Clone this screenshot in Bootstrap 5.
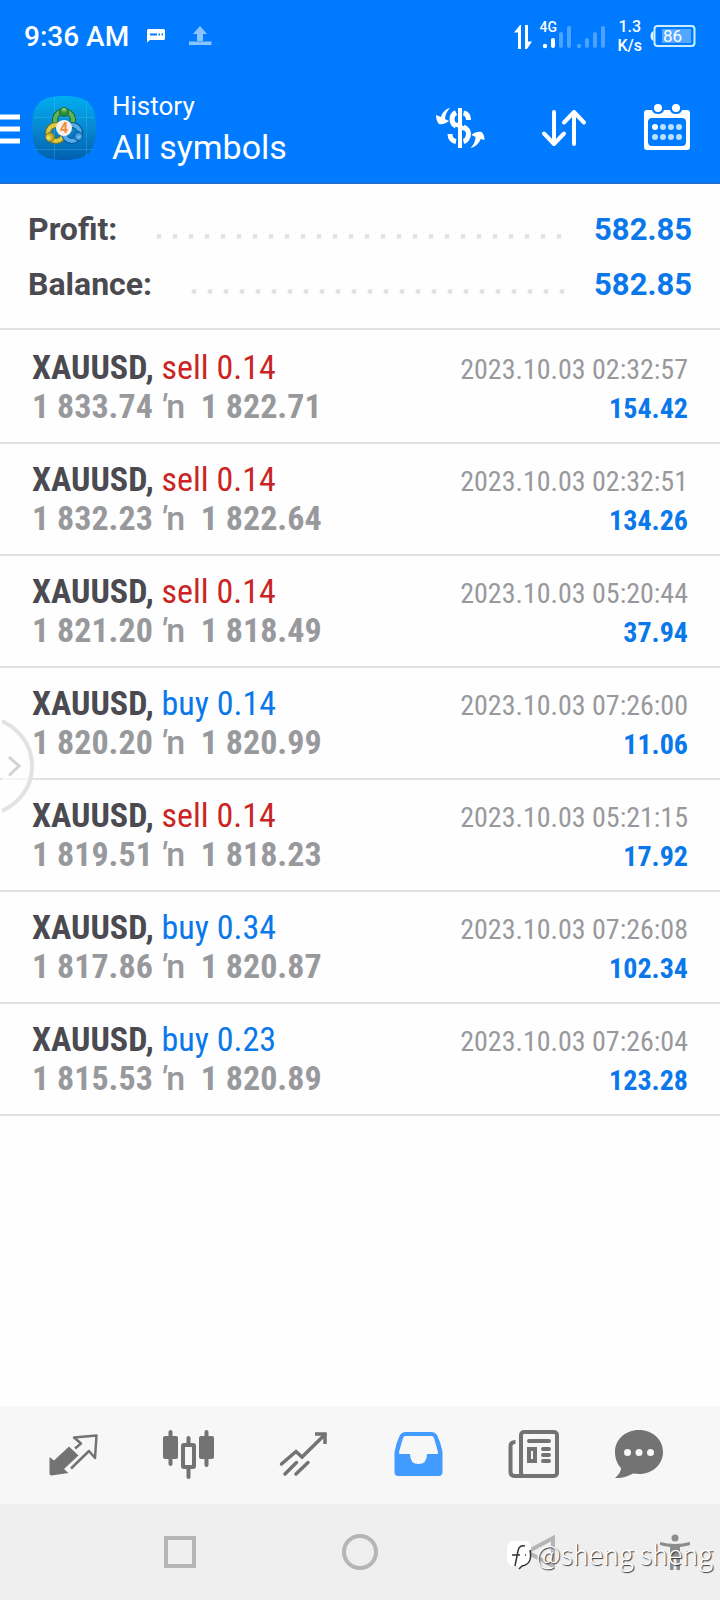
<!DOCTYPE html>
<html lang="en">
<head>
<meta charset="utf-8">
<meta name="viewport" content="width=device-width, initial-scale=1">
<title>History – All symbols</title>
<link href="https://cdn.jsdelivr.net/npm/bootstrap@5.3.0/dist/css/bootstrap.min.css" rel="stylesheet">
<style>
  :root { --brand: #007aff; --ink: #4a4a50; --muted-ink: #98999c; --rule: #e2e2e2; --gain: #0a78ea; --loss: #cb2424; }
  body { font-family: Roboto, "Noto Sans", sans-serif; color: var(--ink); background: #fefefe; }
  svg { display: block; flex: none; }
  .icon-btn { background: none; border: 0; padding: 0; display: block; }

  .app-header { background: var(--brand); border-bottom: 2px solid #1b6fd6; }
  .status-bar { height: 72px; padding: 0 24px; }
  .clock { font-size: 28px; line-height: 32px; font-weight: 500; padding-top: 2px; }
  .net-rate { font-size: 16px; line-height: 19px; font-weight: 500; }
  .toolbar-row { height: 110px; padding: 2px 29px 0 0; }
  .titles { padding-top: 6px; }
  .title-small { font-size: 26px; line-height: 32px; }
  .title-big { font-size: 34px; line-height: 50px; }

  .summary { padding: 18px 28px 16px; border-bottom: 2px solid var(--rule); }
  .summary-line { font-size: 32px; line-height: 55px; font-weight: 700; }
  .summary-line dd { color: var(--gain); font-size: 31px; }
  .leader { height: 5px; margin: 14px 24px 0 34px;
    background: radial-gradient(circle, #e2e2e2 2px, transparent 3px) 0 0 / 16px 5px repeat-x; }

  .deals { padding-top: 2px; }
  .deal { padding: 16px 32px; border-bottom: 2px solid var(--rule); font-family: "Roboto Condensed", Roboto, sans-serif; }
  .deal-main { font-size: 34px; line-height: 39px; white-space: pre; }
  .deal-prices { color: var(--muted-ink); font-weight: 700; }
  .roman { font: 500 34px/30px Roboto, sans-serif; }
  .deal-side { font-size: 28px; line-height: 34px; white-space: nowrap; }
  .deal-time { color: var(--muted-ink); }
  .deal-profit { color: var(--gain); font-weight: 700; }
  .is-buy { color: var(--gain); }
  .is-sell { color: var(--loss); }

  .edge-handle { position: absolute; left: 2px; top: 716px; }
  .tab-bar { background: #f7f7f7; height: 98px; padding: 0 15px; color: #737373; }
  .tab-bar a { color: inherit; }
  .tab-bar a.active { color: #429bff; }
  .system-bar { background: #efefef; height: 96px; padding-left: 12.5%; }
  .watermark { position: absolute; right: 7px; bottom: 24px; color: #fff; font: 300 27px/44px "Noto Sans CJK SC", sans-serif; text-shadow: 1px 1px 1px #333; pointer-events: none; }
</style>
</head>
<body>
<div class="d-flex flex-column min-vh-100 position-relative overflow-hidden">

  <header class="app-header text-white">
    <div class="status-bar d-flex align-items-center">
      <span class="clock">9:36 AM</span>
      <svg class="ms-3" width="68" height="24" viewBox="145 24 68 24">
        <path fill="#fff" d="M148.500 29h15q1.500 0 1.500 1.500v8q0 1.500-1.500 1.500h-13.500l-3 2.500v-12q0-1.500 1.500-1.500z"/>
        <path stroke="#007aff" stroke-width="2" d="M150 34.500h7m1.500 0h1.500m1.500 0h1.500"/>
        <path fill="#8cc4ff" d="M200 26l7 8h-4v7h-6v-7h-4zM189 41.500h22.500v3.500h-22.500z"/>
      </svg>
      <svg class="ms-auto" width="96" height="34" viewBox="513 19 96 34">
        <g fill="#fff">
          <path d="M514 32.500l6-7.500h1v24h-3v-16.500zM525 25h3v16.500h4l-5 7.500h-2z"/>
          <text x="539.500" y="31.500" font-size="14" font-weight="500">4G</text>
          <circle cx="545" cy="46" r="2.200"/><rect x="551" y="38" width="4" height="10" rx="2"/>
        </g>
        <g fill="#4da2ff">
          <rect x="559" y="32" width="4" height="16" rx="2"/><rect x="567" y="26" width="4" height="22" rx="2"/>
          <circle cx="579" cy="46" r="2.200"/><rect x="585" y="38" width="4" height="10" rx="2"/>
          <rect x="593" y="32" width="4" height="16" rx="2"/><rect x="601" y="26" width="4" height="22" rx="2"/>
        </g>
      </svg>
      <div class="net-rate text-center mx-2">1.3<br>K/s</div>
      <svg width="46" height="24" viewBox="650 24 46 24">
        <path fill="#d9f4ff" d="M653.500 31v10q-3-1-3-5t3-5z"/>
        <rect x="654.500" y="26" width="40" height="20" rx="3" fill="none" stroke="#c9efff" stroke-width="2"/>
        <rect x="662" y="29" width="29" height="14" fill="#55a8ff"/>
        <text x="663" y="42" font-size="17" fill="#fff">86</text>
      </svg>
    </div>

    <div class="toolbar-row d-flex align-items-center">
      <button class="icon-btn" aria-label="Menu">
        <svg width="20" height="64" viewBox="0 97 20 64"><path stroke="#fff" stroke-width="5" d="M0 118h20M0 130h20M0 142h20"/></svg>
      </button>
      <svg class="ms-2 me-1" width="72" height="64" viewBox="-4 0 72 64" aria-hidden="true">
        <defs>
          <linearGradient id="tile" x2="0" y2="1"><stop stop-color="#00aef0"/><stop offset=".5" stop-color="#0788d0"/><stop offset="1" stop-color="#0060b0"/></linearGradient>
          <radialGradient id="gr" cx=".5" cy=".15"><stop stop-color="#9fdc7c"/><stop offset="1" stop-color="#2c8a3c"/></radialGradient>
          <radialGradient id="ye" cx=".3" cy=".6"><stop stop-color="#f3ea72"/><stop offset="1" stop-color="#b9a41c"/></radialGradient>
          <radialGradient id="bl" cx=".6" cy=".6"><stop stop-color="#7cc6f5"/><stop offset="1" stop-color="#1878c8"/></radialGradient>
        </defs>
        <path fill="url(#tile)" d="M32 0c24 0 32 8 32 32s-8 32-32 32S0 56 0 32 8 0 32 0z"/>
        <path stroke="#5fd0f5" stroke-opacity=".25" d="M22.500 1v62M54.500 4v56M2 21.500h60M2 53.500h60"/>
        <g fill="none" stroke-linecap="round">
          <circle cx="32" cy="24" r="9" stroke="#1d6b35" stroke-width="6"/><circle cx="32" cy="24" r="9" stroke="#5cb554" stroke-width="4"/>
          <circle cx="24" cy="37" r="8" stroke="#7c7420" stroke-width="6"/><circle cx="24" cy="37" r="8" stroke="#dccb45" stroke-width="4"/>
          <circle cx="40" cy="37" r="8" stroke="#0c5a9c" stroke-width="6"/><circle cx="40" cy="37" r="8" stroke="#55aeea" stroke-width="4"/>
        </g>
        <circle cx="32" cy="16" r="4.500" fill="url(#gr)" stroke="#1d6b35"/>
        <circle cx="18" cy="41" r="4.500" fill="url(#ye)" stroke="#7c7420"/>
        <circle cx="46" cy="40" r="4.500" fill="url(#bl)" stroke="#0c5a9c"/>
        <circle cx="32" cy="32" r="8" fill="#f7f1ea"/>
        <text x="32" y="37" text-anchor="middle" font-size="14" font-weight="700" fill="#f08a35">4</text>
      </svg>
      <div class="titles ms-2">
        <div class="title-small">History</div>
        <h1 class="title-big fw-normal mb-0">All symbols</h1>
      </div>
      <div class="d-flex align-items-center ms-auto gap-5">
        <button class="icon-btn" aria-label="Currency">
          <svg width="50" height="52" viewBox="435 102 50 52">
            <g fill="none" stroke="#fff" stroke-width="5">
              <path d="M456 112.500c-3 1.500-4 4-4 6.500 0 4 2 6 4 7M463.500 113c3 .5 5 3 5 7M463.500 127c3 1.500 5 4 5 7 0 4-2.500 7-5 7.500M450 134c0 4 2.500 7 6 7.500"/>
              <path stroke-width="4" d="M460 108v40"/>
              <path stroke-width="4" d="M453 123q8 4 12 6"/>
            </g>
            <path fill="#fff" d="M450 108c-5 1-8 5-9 9l-5-2c0 4 1 7 3 9 4 1 7-1 10-3l-4-2c0-4 2-8 5-11zM470.500 148c5-1 9-5 10-9l4 1c0-4-1-6-3-8-4-1-8 1-10 3l4 2c0 4-2 8-5 11z"/>
          </svg>
        </button>
        <button class="icon-btn mx-2" aria-label="Sort">
          <svg width="46" height="52" viewBox="541 102 46 52" fill="none" stroke="#fff" stroke-width="4" stroke-linecap="round" stroke-linejoin="round">
            <path d="M554 112v32M544 133.500l10 10.500 10-10.500M574 144v-32M564 122.500l10-10.500 10 10.500"/>
          </svg>
        </button>
        <button class="icon-btn" aria-label="Period">
          <svg width="48" height="52" viewBox="643 102 48 52">
            <path fill="#fff" fill-rule="evenodd" d="M647 110h5q1 4 6 4t6-4h6q1 4 6 4t6-4h5q3 0 3 3v34q0 3-3 3h-40q-3 0-3-3v-34q0-3 3-3zM652 118q-4 0-4 4v20q0 4 4 4h30q4 0 4-4v-20q0-4-4-4z"/>
            <g fill="#fff"><circle cx="658" cy="108" r="4"/><circle cx="676" cy="108" r="4"/></g>
            <g fill="#b5e2ff"><circle cx="655" cy="127" r="3" fill="#fff"/><circle cx="663" cy="127" r="3"/><circle cx="671" cy="127" r="3"/><circle cx="679" cy="127" r="3"/><circle cx="655" cy="137" r="3"/><circle cx="663" cy="137" r="3"/><circle cx="671" cy="137" r="3"/><circle cx="679" cy="137" r="3"/></g>
          </svg>
        </button>
      </div>
    </div>
  </header>

  <main class="flex-grow-1">
    <dl class="summary mb-0">
      <div class="summary-line d-flex align-items-center"><dt>Profit:</dt><span class="leader flex-grow-1"></span><dd class="mb-0">582.85</dd></div>
      <div class="summary-line d-flex align-items-center"><dt>Balance:</dt><span class="leader flex-grow-1"></span><dd class="mb-0">582.85</dd></div>
    </dl>

    <ul class="deals list-unstyled mb-0">
      <li class="deal">
        <div class="d-flex justify-content-between align-items-baseline"><span class="deal-main"><b>XAUUSD,</b> <span class="is-sell">sell 0.14</span></span><time class="deal-side deal-time">2023.10.03 02:32:57</time></div>
        <div class="d-flex justify-content-between align-items-baseline"><span class="deal-main deal-prices">1 833.74 <span class="roman"><i>′</i>n</span>  1 822.71</span><span class="deal-side deal-profit">154.42</span></div>
      </li>
      <li class="deal">
        <div class="d-flex justify-content-between align-items-baseline"><span class="deal-main"><b>XAUUSD,</b> <span class="is-sell">sell 0.14</span></span><time class="deal-side deal-time">2023.10.03 02:32:51</time></div>
        <div class="d-flex justify-content-between align-items-baseline"><span class="deal-main deal-prices">1 832.23 <span class="roman"><i>′</i>n</span>  1 822.64</span><span class="deal-side deal-profit">134.26</span></div>
      </li>
      <li class="deal">
        <div class="d-flex justify-content-between align-items-baseline"><span class="deal-main"><b>XAUUSD,</b> <span class="is-sell">sell 0.14</span></span><time class="deal-side deal-time">2023.10.03 05:20:44</time></div>
        <div class="d-flex justify-content-between align-items-baseline"><span class="deal-main deal-prices">1 821.20 <span class="roman"><i>′</i>n</span>  1 818.49</span><span class="deal-side deal-profit">37.94</span></div>
      </li>
      <li class="deal">
        <div class="d-flex justify-content-between align-items-baseline"><span class="deal-main"><b>XAUUSD,</b> <span class="is-buy">buy 0.14</span></span><time class="deal-side deal-time">2023.10.03 07:26:00</time></div>
        <div class="d-flex justify-content-between align-items-baseline"><span class="deal-main deal-prices">1 820.20 <span class="roman"><i>′</i>n</span>  1 820.99</span><span class="deal-side deal-profit">11.06</span></div>
      </li>
      <li class="deal">
        <div class="d-flex justify-content-between align-items-baseline"><span class="deal-main"><b>XAUUSD,</b> <span class="is-sell">sell 0.14</span></span><time class="deal-side deal-time">2023.10.03 05:21:15</time></div>
        <div class="d-flex justify-content-between align-items-baseline"><span class="deal-main deal-prices">1 819.51 <span class="roman"><i>′</i>n</span>  1 818.23</span><span class="deal-side deal-profit">17.92</span></div>
      </li>
      <li class="deal">
        <div class="d-flex justify-content-between align-items-baseline"><span class="deal-main"><b>XAUUSD,</b> <span class="is-buy">buy 0.34</span></span><time class="deal-side deal-time">2023.10.03 07:26:08</time></div>
        <div class="d-flex justify-content-between align-items-baseline"><span class="deal-main deal-prices">1 817.86 <span class="roman"><i>′</i>n</span>  1 820.87</span><span class="deal-side deal-profit">102.34</span></div>
      </li>
      <li class="deal">
        <div class="d-flex justify-content-between align-items-baseline"><span class="deal-main"><b>XAUUSD,</b> <span class="is-buy">buy 0.23</span></span><time class="deal-side deal-time">2023.10.03 07:26:04</time></div>
        <div class="d-flex justify-content-between align-items-baseline"><span class="deal-main deal-prices">1 815.53 <span class="roman"><i>′</i>n</span>  1 820.89</span><span class="deal-side deal-profit">123.28</span></div>
      </li>
    </ul>
  </main>

  <button class="icon-btn edge-handle" aria-label="Open side panel">
    <svg width="34" height="100" viewBox="2 716 34 100" fill="none">
      <circle cx="-16" cy="766" r="48" fill="#fefefe" fill-opacity=".7" stroke="#e2e2e2" stroke-width="4"/>
      <path stroke="#d2d2d2" stroke-width="3" d="M9 757l10 9-10 9.500"/>
    </svg>
  </button>

  <nav class="tab-bar d-flex align-items-center" aria-label="Sections">
    <a href="#quotes" class="flex-fill d-flex justify-content-center" aria-label="Quotes">
      <svg width="54" height="54" viewBox="46 1428 54 54">
        <path fill="currentColor" d="M49.500 1457l4.500 3.500 15-14 9.500 9-14.500 13.500 4.500 4-17 2.500q-2 0-2-2z"/>
        <path fill="none" stroke="currentColor" stroke-width="2.500" stroke-linejoin="round" d="M75 1448.500l6-5-7-6 22.500-2-1.500 22.500-6-7-18 17.500"/>
      </svg>
    </a>
    <a href="#charts" class="flex-fill d-flex justify-content-center" aria-label="Charts">
      <svg width="54" height="54" viewBox="161 1428 54 54">
        <path stroke="currentColor" stroke-width="4" stroke-linecap="round" d="M170.500 1432v32M206.500 1432v33M188.500 1438v6M188.500 1468v9"/>
        <g fill="currentColor"><rect x="163" y="1436" width="15" height="23" rx="2"/><rect x="199" y="1436" width="15" height="23" rx="2"/></g>
        <rect x="183" y="1445" width="11" height="22" rx="1" fill="none" stroke="currentColor" stroke-width="4"/>
      </svg>
    </a>
    <a href="#trade" class="flex-fill d-flex justify-content-center" aria-label="Trade">
      <svg width="54" height="54" viewBox="276 1428 54 54" fill="none" stroke="currentColor" stroke-width="3.500" stroke-linecap="round">
        <path d="M281.500 1464l14.500-12.500 6 5.500 23-22.500M285 1474l11.500-11.500M296 1474l12-11.500"/>
        <path stroke-linecap="butt" d="M315 1434h10v10"/>
      </svg>
    </a>
    <a href="#history" class="active flex-fill d-flex justify-content-center" aria-label="History" aria-current="page">
      <svg width="54" height="54" viewBox="391 1428 54 54">
        <path fill="currentColor" fill-rule="evenodd" d="M405 1432h27q3 0 5 3 4 8 5.500 17v20q0 4-4 4h-40q-4 0-4-4v-20q1.500-9 5.500-17 2-3 5-3zM405 1436q-1 0-2 2l-4 14q-.5 2 1 2h10q0 10 8.500 10t8.500-10h10q1.500 0 1-2l-4-14q-1-2-2-2z"/>
      </svg>
    </a>
    <a href="#news" class="flex-fill d-flex justify-content-center" aria-label="News">
      <svg width="54" height="54" viewBox="506 1428 54 54" fill="none" stroke="currentColor" stroke-width="4">
        <rect x="521" y="1432" width="36" height="44" rx="3"/>
        <path d="M515.500 1442q-5 0-5 4v26q0 4 5 4h8"/>
        <path stroke-linecap="round" d="M529 1441h20M543 1449h6M543 1455h6M543 1461h6"/>
        <rect x="529" y="1449" width="6" height="12" stroke-width="4"/>
      </svg>
    </a>
    <a href="#messages" class="flex-fill d-flex justify-content-center" aria-label="Messages">
      <svg width="54" height="54" viewBox="621 1428 54 54" overflow="visible">
        <path fill="currentColor" d="M639 1430c14 0 24 10 24 22s-10 22-24 22l-6-.500c-5 3-11 5-18 4.500 4-3 6-7 6-10-4-4-6-10-6-16 0-12 10-22 24-22z"/>
        <g fill="#f7f7f7"><circle cx="627.500" cy="1452.500" r="3.500"/><circle cx="639" cy="1452.500" r="3.500"/><circle cx="650.500" cy="1452.500" r="3.500"/></g>
      </svg>
    </a>
  </nav>

  <div class="system-bar d-flex align-items-center">
    <div class="w-100 d-flex justify-content-center"><button class="icon-btn" aria-label="Recent apps">
      <svg width="36" height="36" fill="none" stroke="#b5b5b5" stroke-width="4"><path d="M4 4h28v28h-28z"/></svg></button></div>
    <div class="w-100 d-flex justify-content-center"><button class="icon-btn" aria-label="Home">
      <svg width="36" height="36" fill="none" stroke="#b5b5b5" stroke-width="4"><circle cx="18" cy="18" r="16"/></svg></button></div>
    <div class="w-100 d-flex justify-content-center"><button class="icon-btn" aria-label="Back">
      <svg width="36" height="36" fill="none" stroke="#b5b5b5" stroke-width="4"><path d="M31 4L5 18l26 14z"/></svg></button></div>
    <div class="w-50 d-flex justify-content-center"><button class="icon-btn" aria-label="Accessibility">
      <svg width="32" height="36" fill="#8c8c8c"><circle cx="16" cy="4" r="3.500"/><path d="M1 8q15 4 30 0v3q-5 1.500-10 2v23h-3.500v-11h-3v11h-3.500v-23q-5-.500-10-2z"/></svg></button></div>
  </div>

  <div class="watermark d-flex align-items-center">
    <svg width="30" height="28" viewBox="505 1542 30 28" overflow="visible">
      <path fill="#fff" d="M513 1543h10q7 0 7 8v9q0 7-7 8l-5 3-1-3h-4q-7 0-7-8v-9q0-8 7-8z"/>
      <path fill="none" stroke="#333" stroke-width="1.500" d="M524 1548q-6-1-7 5l-3 15M511 1557h8M524 1557h1M529 1552q3 14-8 16l-3 3"/>
    </svg>
    <span>@sheng sheng</span>
  </div>
</div>
<script src="https://cdn.jsdelivr.net/npm/bootstrap@5.3.0/dist/js/bootstrap.bundle.min.js"></script>
</body>
</html>
